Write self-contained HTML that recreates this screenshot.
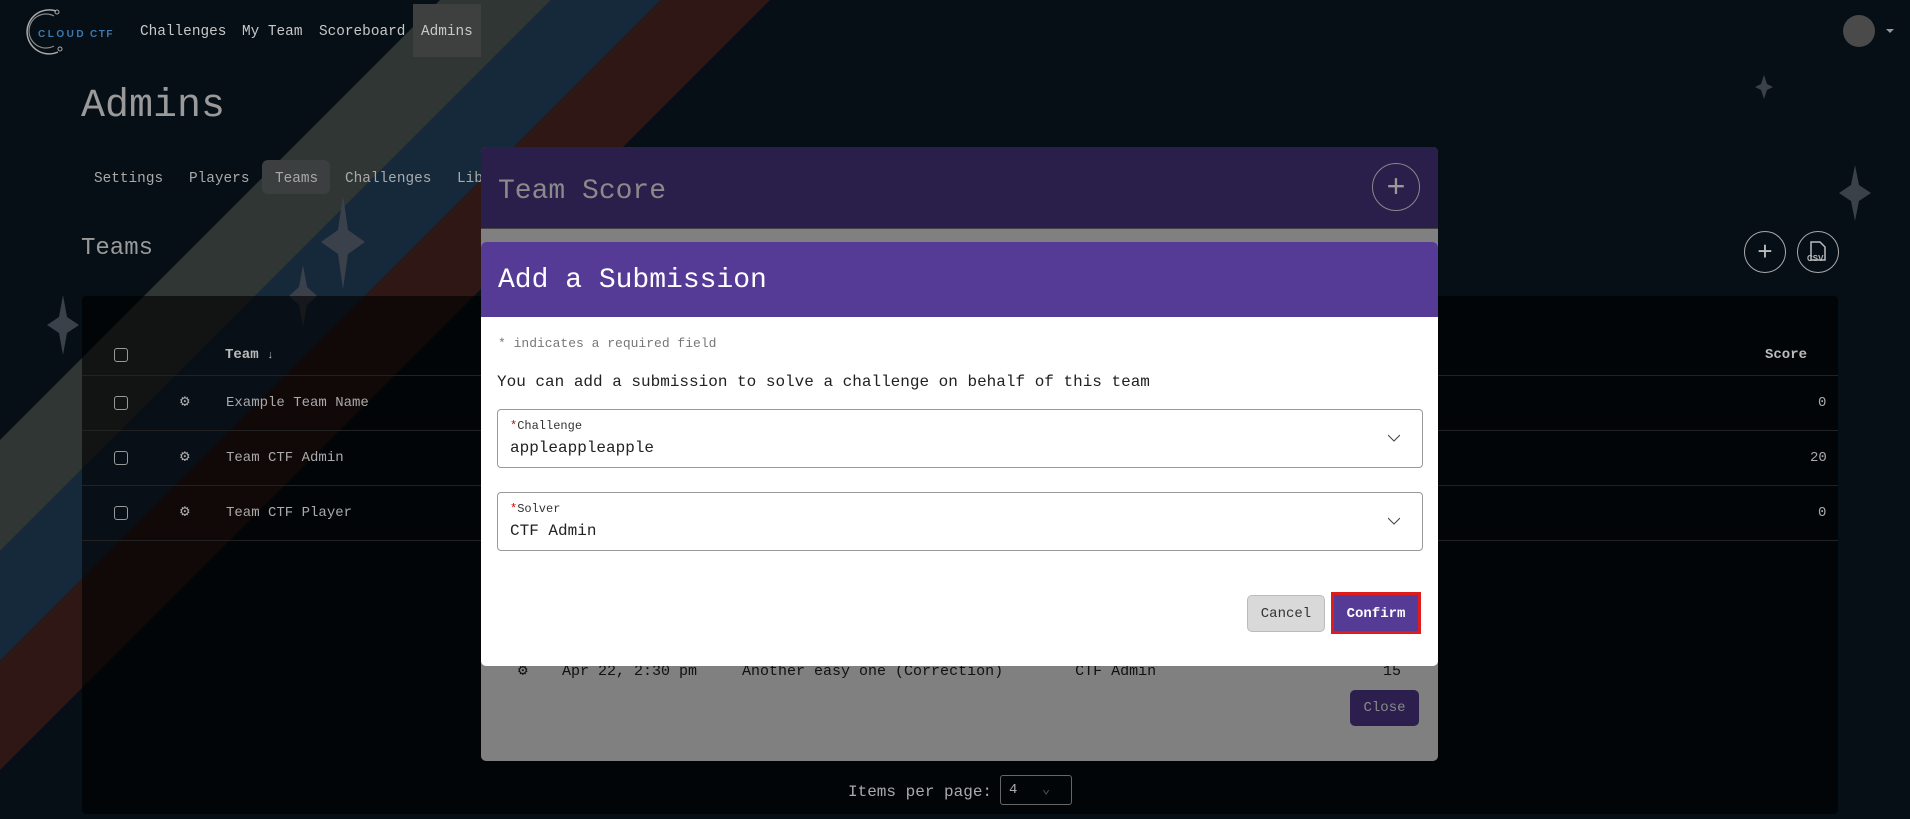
<!DOCTYPE html>
<html><head><meta charset="utf-8"><style>
*{box-sizing:border-box;margin:0;padding:0}
body{width:1910px;height:819px;overflow:hidden;background:#060e16;font-family:"Liberation Mono",monospace;position:relative;color:#b9b9b9}
.abs{position:absolute}
.nav a{position:absolute;top:24px;font-size:14.4px;color:#c8c8c8}
.tab{position:absolute;top:171px;font-size:14.4px;color:#a9a9a9}
.g{position:absolute;left:180px;font-size:16px;color:#aaa;line-height:18px}
</style></head><body>
<svg class="abs" style="left:0;top:0" width="1910" height="819">
<polygon points="440,0 551,0 -268,819 -379,819" fill="#303633"/>
<polygon points="551,0 661,0 -158,819 -268,819" fill="#16293a"/>
<polygon points="661,0 770,0 -49,819 -158,819" fill="#2e1715"/>
<g fill="#3a414b">
<path d="M1764 75 l3 9 l6 3 l-6 3 l-3 9 l-3 -9 l-6 -3 l6 -3z"/>
<path d="M1855 165 l4 20 l12 8 l-12 8 l-4 20 l-4 -20 l-12 -8 l12 -8z"/>
<path d="M63 295 l4 22 l12 8 l-12 8 l-4 22 l-4 -22 l-12 -8 l12 -8z"/>
<path d="M343 195 l5 35 l17 12 l-17 12 l-5 35 l-5 -35 l-17 -12 l17 -12z"/>
<path d="M303 265 l4 22 l10 9 l-10 9 l-4 22 l-4 -22 l-10 -9 l10 -9z"/>
</g>
</svg>
<svg class="abs" style="left:18px;top:6px" width="110" height="50">
<path d="M38 5 A22 22 0 1 0 40 46" fill="none" stroke="#aaa" stroke-width="1.5"/>
<path d="M36 10 A17 17 0 1 0 36 40" fill="none" stroke="#888" stroke-width="1.2"/>
<circle cx="39" cy="6" r="2" fill="none" stroke="#aaa"/><circle cx="42" cy="43" r="2" fill="none" stroke="#aaa"/>
<text x="20" y="31" font-family="Liberation Sans" font-size="10" font-weight="bold" fill="#3b7ab0" letter-spacing="2.5">CLOUD</text>
<text x="72" y="31" font-family="Liberation Sans" font-size="10" font-weight="bold" fill="#3b7ab0" letter-spacing="1.5">CTF</text>
</svg>
<div class="nav">
<a style="left:140px">Challenges</a><a style="left:242px">My Team</a><a style="left:319px">Scoreboard</a>
<div class="abs" style="left:413px;top:4px;width:68px;height:53px;background:#3d403f"></div>
<a style="left:421px">Admins</a>
</div>
<div class="abs" style="left:1843px;top:15px;width:32px;height:32px;border-radius:50%;background:#4a4a4a"></div>
<div class="abs" style="left:1886px;top:29px;border:4px solid transparent;border-top:4px solid #999"></div>
<div class="abs" style="left:81px;top:84px;font-size:40px;color:#9a9a9a">Admins</div>
<div class="abs" style="left:262px;top:160px;width:68px;height:34px;border-radius:6px;background:#3b3f3f"></div>
<div class="tab" style="left:94px">Settings</div>
<div class="tab" style="left:189px">Players</div>
<div class="tab" style="left:275px">Teams</div>
<div class="tab" style="left:345px">Challenges</div>
<div class="tab" style="left:457px">Lib</div>
<div class="abs" style="left:81px;top:235px;font-size:24px;color:#9a9a9a">Teams</div>
<div class="abs" style="left:1744px;top:231px;width:42px;height:42px;border:1.5px solid #aaa;border-radius:50%;color:#bbb;font-size:26px;text-align:center;line-height:38px;font-family:'Liberation Sans'">+</div>
<div class="abs" style="left:1797px;top:231px;width:42px;height:42px;border:1.5px solid #aaa;border-radius:50%"><svg width="40" height="40"><path d="M13 10 h9 l5 5 v13 h-14z" fill="none" stroke="#bbb" stroke-width="1.5"/><text x="9" y="29" font-family="Liberation Sans" font-size="8" font-weight="bold" fill="#bbb">CSV</text></svg></div>
<div class="abs" style="left:82px;top:296px;width:1756px;height:518px;background:rgba(0,0,0,.62);border-radius:4px"></div>
<div class="abs" style="left:82px;top:375px;width:1756px;border-top:1px solid #222"></div>
<div class="abs" style="left:82px;top:430px;width:1756px;border-top:1px solid #222"></div>
<div class="abs" style="left:82px;top:485px;width:1756px;border-top:1px solid #222"></div>
<div class="abs" style="left:82px;top:540px;width:1756px;border-top:1px solid #222"></div>
<div class="abs" style="left:114px;top:348px;width:14px;height:14px;border:1.5px solid #999;border-radius:3px"></div>
<div class="abs" style="left:114px;top:396px;width:14px;height:14px;border:1.5px solid #999;border-radius:3px"></div>
<div class="abs" style="left:114px;top:451px;width:14px;height:14px;border:1.5px solid #999;border-radius:3px"></div>
<div class="abs" style="left:114px;top:506px;width:14px;height:14px;border:1.5px solid #999;border-radius:3px"></div>
<div class="abs" style="left:225px;top:347px;font-size:14px;font-weight:bold;color:#bbb">Team <span style="font-weight:normal;font-size:11px">↓</span></div>
<div class="abs" style="left:1765px;top:347px;font-size:14px;font-weight:bold;color:#bbb">Score</div>
<div class="g" style="top:393px">⚙</div><div class="g" style="top:448px">⚙</div><div class="g" style="top:503px">⚙</div>
<div class="abs" style="left:226px;top:395px;font-size:14px;color:#aaa">Example Team Name</div>
<div class="abs" style="left:226px;top:450px;font-size:14px;color:#aaa">Team CTF Admin</div>
<div class="abs" style="left:226px;top:505px;font-size:14px;color:#aaa">Team CTF Player</div>
<div class="abs" style="left:1818px;top:395px;font-size:14px;color:#aaa">0</div>
<div class="abs" style="left:1810px;top:450px;font-size:14px;color:#aaa">20</div>
<div class="abs" style="left:1818px;top:505px;font-size:14px;color:#aaa">0</div>
<div class="abs" style="left:848px;top:783px;font-size:16px;color:#aaa">Items per page:</div>
<div class="abs" style="left:1000px;top:775px;width:72px;height:30px;border:1px solid #666;border-radius:3px;color:#aaa;font-size:14px;padding:5px 8px">4 <span style="margin-left:16px;color:#555">⌄</span></div>
<div class="abs" style="left:481px;top:147px;width:957px;height:614px;background:#808080;border-radius:5px;overflow:hidden">
<div style="height:82px;background:#2a1e4b;border-bottom:1px solid #444"></div>
<div class="abs" style="left:17px;top:29px;font-size:28px;color:#8a8a8a">Team Score</div>
<div class="abs" style="left:891px;top:16px;width:48px;height:48px;border:1.5px solid #888;border-radius:50%;color:#999;font-size:32px;text-align:center;line-height:44px;font-family:'Liberation Sans'">+</div>
<div class="abs" style="left:37px;top:515px;font-size:16px;color:#111;line-height:18px">⚙</div>
<div class="abs" style="left:81px;top:516px;font-size:15px;color:#111;white-space:pre">Apr 22, 2:30 pm     Another easy one (Correction)        CTF Admin</div>
<div class="abs" style="left:902px;top:516px;font-size:15px;color:#111">15</div>
<div class="abs" style="left:869px;top:543px;width:69px;height:36px;background:#2c1f4d;border-radius:5px;color:#8a8a8a;font-size:14px;text-align:center;line-height:36px">Close</div>
</div>
<div class="abs" style="left:481px;top:242px;width:957px;height:424px;background:#fff;border-radius:5px;overflow:hidden">
<div style="height:75px;background:#553a96;padding:23px 17px 0;font-size:28px;color:#fff">Add a Submission</div>
<div class="abs" style="left:17px;top:94px;font-size:13px;color:#777">* indicates a required field</div>
<div class="abs" style="left:16px;top:131px;font-size:16px;color:#222">You can add a submission to solve a challenge on behalf of this team</div>
<div class="abs" style="left:16px;top:167px;width:926px;height:59px;border:1px solid #999;border-radius:4px">
<div class="abs" style="left:12px;top:9px;font-size:12px;color:#333"><span style="color:#d00">*</span>Challenge</div>
<div class="abs" style="left:12px;top:29px;font-size:16px;color:#222">appleappleapple</div>
<svg class="abs" style="right:22px;top:24px" width="12" height="8"><path d="M0 1 L6 7 L12 1" fill="none" stroke="#444"/></svg></div>
<div class="abs" style="left:16px;top:250px;width:926px;height:59px;border:1px solid #999;border-radius:4px">
<div class="abs" style="left:12px;top:9px;font-size:12px;color:#333"><span style="color:#d00">*</span>Solver</div>
<div class="abs" style="left:12px;top:29px;font-size:16px;color:#222">CTF Admin</div>
<svg class="abs" style="right:22px;top:24px" width="12" height="8"><path d="M0 1 L6 7 L12 1" fill="none" stroke="#444"/></svg></div>
<div class="abs" style="left:766px;top:353px;width:78px;height:37px;background:#d9d9d9;border:1px solid #bbb;border-radius:5px;font-size:14px;color:#333;text-align:center;line-height:37px">Cancel</div>
<div class="abs" style="left:850px;top:350px;width:90px;height:42px;background:#553a96;border:3px solid #e01b1b;font-size:14px;font-weight:bold;color:#fff;text-align:center;line-height:38px">Confirm</div>
</div>
</body></html>
